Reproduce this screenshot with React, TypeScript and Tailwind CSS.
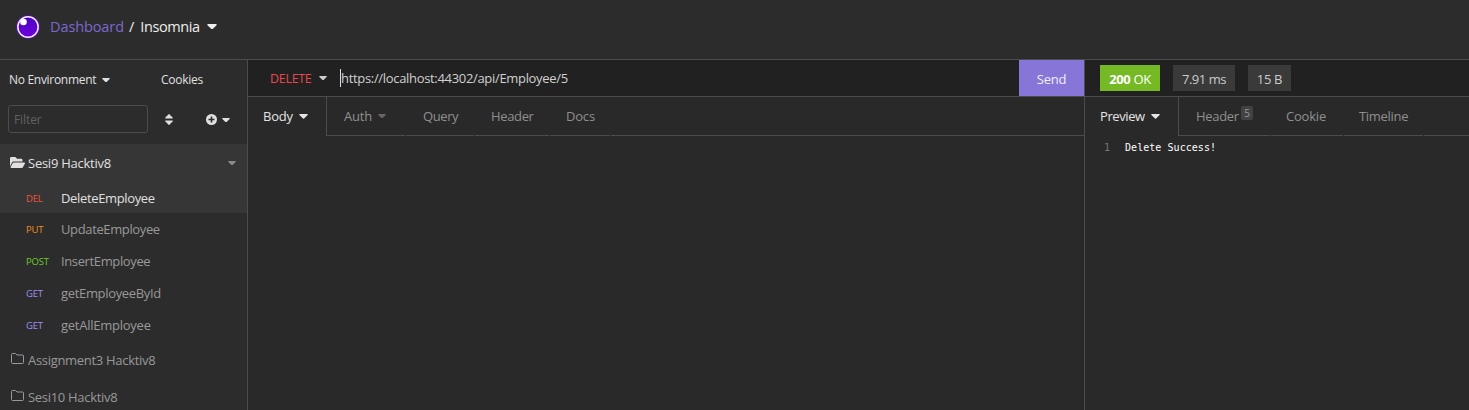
import React from "react";

const Caret = ({ className = "", w = 9 }: { className?: string; w?: number }) => (
  <svg className={`shrink-0 ${className}`} width={w} height={(w * 5) / 9} viewBox="0 0 9 5" fill="currentColor">
    <path d="M0.9 0h7.2c.6 0 .9.7.5 1.1L5.1 4.6c-.3.3-.8.3-1.1 0L.4 1.1C0 .7.3 0 .9 0z" />
  </svg>
);

const FolderOpen = () => (
  <svg className="mb-[2px] shrink-0" width="15" height="11" viewBox="0 0 576 384" preserveAspectRatio="none" fill="currentColor">
    <path d="M572.700 228.100l-72.400 124.200A64 64 0 0 1 445 384H45c-18.500 0-30.100-20.100-20.700-36.100l72.400-124.200A64 64 0 0 1 152 192h400c18.500 0 30.100 20.100 20.700 36.100zM152 160h328v-48c0-26.500-21.500-48-48-48H272L208 0H48C21.500 0 0 21.500 0 48v278l69.100-118.400C86.200 178.200 118 160 152 160z" />
  </svg>
);

const Folder = () => (
  <svg className="mb-[2px] shrink-0" width="13" height="11" viewBox="0 0 13 11" fill="none" stroke="currentColor">
    <path d="M1.500 0.500h3l1.500 1.500h5.500a1 1 0 0 1 1 1v6.500a1 1 0 0 1-1 1h-10a1 1 0 0 1-1-1v-8a1 1 0 0 1 1-1z" />
  </svg>
);

const Logo = () => (
  <svg width="24" height="24" viewBox="0 0 24 24" className="shrink-0">
    <defs>
      <linearGradient id="orb" x1="0" y1="0" x2="0" y2="1">
        <stop offset="0" stopColor="#4a00c0" />
        <stop offset="1" stopColor="#6f00dd" />
      </linearGradient>
    </defs>
    <circle cx="12" cy="12" r="11.800" fill="#5a10c0" />
    <circle cx="12" cy="12" r="10.900" fill="#f4ecff" />
    <circle cx="12" cy="12" r="9.400" fill="url(#orb)" />
    <circle cx="7.500" cy="7" r="3.300" fill="#fff" />
  </svg>
);

const requests = [
  { m: "PUT", c: "text-[#ee8e1e]", n: "UpdateEmployee", t: "tracking-[-0.37px]" },
  { m: "POST", c: "text-[#6fca2a]", n: "InsertEmployee", t: "tracking-[-0.37px]" },
  { m: "GET", c: "text-[#9f8ff0]", n: "getEmployeeById", t: "tracking-[-0.33px]" },
  { m: "GET", c: "text-[#9f8ff0]", n: "getAllEmployee", t: "tracking-[-0.25px]" },
];

function Sidebar() {
  return (
    <aside className="flex w-[248px] shrink-0 flex-col border-r border-[#4c4c4c] text-[#e0e0e0]">
      <div className="flex h-10 shrink-0 items-center pl-[9px] text-[12px]">
        <span className="w-[87px] tracking-[-0.3px]">No Environment</span>
        <Caret className="ml-1.5" w={8} />
        <span className="ml-[51px] tracking-[-0.25px]">Cookies</span>
      </div>
      <div className="flex h-[44px] shrink-0 items-start pt-[5px] pl-2">
        <div className="flex h-7 w-[140px] items-center rounded-[3px] border border-[#4c4c4c] pt-px pl-[5px] text-[12px] tracking-[-0.1px] text-[#616161]">Filter</div>
        <svg className="mt-[9px] ml-[17px]" width="8" height="11" viewBox="0 0 8 11" fill="currentColor">
          <path d="M.5 4.500h7c.4 0 .6-.5.3-.8L4.400.3a.6.6 0 0 0-.8 0L.2 3.700c-.3.3-.1.800.3.800zM.5 6.500h7c.4 0 .6.5.3.800L4.400 10.700a.6.6 0 0 1-.8 0L.2 7.300c-.3-.3-.1-.8.3-.8z" />
        </svg>
        <svg className="mt-[9px] ml-[33px]" width="11" height="11" viewBox="0 0 11 11">
          <circle cx="5.500" cy="5.500" r="5.500" fill="#e0e0e0" />
          <path d="M5.500 2.500v6M2.500 5.500h6" stroke="#2c2c2c" strokeWidth="1.600" />
        </svg>
        <Caret className="mt-[13px] ml-[5px]" w={8} />
      </div>
      <div className="flex h-[69px] shrink-0 flex-col bg-[#363636]">
        <div className="flex h-[38px] shrink-0 items-center pl-[10px]">
          <FolderOpen />
          <span className="ml-[3px] tracking-[-0.25px]">Sesi9 Hacktiv8</span>
          <Caret className="mr-[11px] ml-auto text-[#8a8a8a]" w={8} />
        </div>
        <div className="flex h-[32px] shrink-0 items-center pl-[26px]">
          <span className="w-[35px] pt-px text-[9.5px] tracking-[-0.2px] text-[#f0503c]">DEL</span>
          <span className="tracking-[-0.35px]">DeleteEmployee</span>
        </div>
      </div>
      <div className="flex flex-col text-[#999]">
        {requests.map((r) => (
          <div key={r.n} className="flex h-8 shrink-0 items-center pl-[26px]">
            <span className={`w-[35px] pt-[2px] text-[9.5px] tracking-[-0.2px] ${r.c}`}>{r.m}</span>
            <span className={r.t}>{r.n}</span>
          </div>
        ))}
        {["Assignment3 Hacktiv8", "Sesi10 Hacktiv8"].map((n) => (
          <div key={n} className="flex h-[37px] shrink-0 items-center pl-[11px]">
            <Folder />
            <span className="ml-[4px] tracking-[-0.3px]">{n}</span>
          </div>
        ))}
      </div>
    </aside>
  );
}

const Tab = ({ children, className }: { children: React.ReactNode; className: string }) => (
  <div className={`mr-px flex items-center border-b border-[#4c4c4c] pl-4 ${className}`}>{children}</div>
);

function RequestPane() {
  return (
    <section className="flex w-[837px] shrink-0 flex-col border-r border-[#4c4c4c] bg-[#292929]">
      <div className="flex h-[37px] border-b border-[#4c4c4c] bg-[#212121]">
        <div className="flex flex-1 items-center pl-[22px]">
          <span className="w-[43px] pt-[2px] text-[12.500px] tracking-[-0.3px] text-[#e5484d]">DELETE</span>
          <Caret className="ml-[6px] text-[#ccc]" w={8} />
          <span className="ml-[13px] h-[18px] w-px bg-[#ddd]" />
          <span className="tracking-[-0.32px] text-[#d0d0d0]">https://localhost:44302/api/Employee/5</span>
        </div>
        <button className="w-[65px] pt-px text-[#f0eefa] bg-[#8875d8] tracking-[-0.2px]">Send</button>
      </div>
      <nav className="flex h-[39px] text-[#8f8f8f]">
        <div className="flex w-[79px] items-center border-r border-[#4c4c4c] pb-px pl-[15px] text-[#e4e4e4]">
          <span className="w-[30px] tracking-[-0.25px]">Body</span>
          <Caret className="ml-[6px]" w={9} />
        </div>
        <Tab className="w-[78px]">
          <span className="ml-px w-[29px] tracking-[-0.2px]">Auth</span>
          <Caret className="ml-[5px] text-[#666]" w={8} />
        </Tab>
        <Tab className="w-[68px]"><span className="ml-px tracking-[-0.4px]">Query</span></Tab>
        <Tab className="w-[74px]"><span className="tracking-[-0.35px]">Header</span></Tab>
        <Tab className="w-[60px]"><span className="tracking-[-0.2px]">Docs</span></Tab>
        <div className="flex-1 border-b border-[#4c4c4c]" />
      </nav>
    </section>
  );
}

function ResponsePane() {
  return (
    <section className="flex min-w-0 flex-1 flex-col bg-[#292929]">
      <div className="flex h-[37px] items-center gap-[13px] border-b border-[#4c4c4c] bg-[#212121] pl-[15px] text-[#ccc]">
        <div className="flex h-[26px] w-[60px] items-center justify-center bg-[#75ba24] pt-[2px] text-white">
          <span className="tracking-[-0.35px]"><b>200</b> OK</span>
        </div>
        <div className="flex h-[26px] w-[62px] items-center justify-center bg-[#3a3a3a] pt-[2px] tracking-[-0.45px]">7.91 ms</div>
        <div className="flex h-[26px] w-[43px] items-center justify-center bg-[#3a3a3a] pt-[2px] tracking-[-0.3px]">15 B</div>
      </div>
      <nav className="flex h-[39px] text-[#8f8f8f]">
        <div className="flex w-[94px] items-center border-r border-[#4c4c4c] pb-px pl-[15px] text-[#e4e4e4]">
          <span className="w-[45px] tracking-[-0.4px]">Preview</span>
          <Caret className="ml-[6px]" w={9} />
        </div>
        <Tab className="w-[91px]">
          <span className="ml-px w-[42px] tracking-[-0.3px]">Header</span>
          <span className="mb-1.5 ml-[3px] flex h-[14px] w-3 items-center justify-center rounded-[2px] bg-[#424242] text-[10px] text-[#999]">5</span>
        </Tab>
        <Tab className="w-[72px]"><span className="-ml-px tracking-[-0.2px]">Cookie</span></Tab>
        <Tab className="w-[79px]"><span className="-ml-px tracking-[-0.3px]">Timeline</span></Tab>
        <div className="flex-1 border-b border-[#4c4c4c]" />
      </nav>
      <div className="flex pt-[4px] font-['DejaVu_Sans_Mono',monospace] text-[10px] leading-4">
        <span className="w-10 pl-[19px] text-[#777]">1</span>
        <span className="tracking-[0.05px] text-[#fff]">Delete Success!</span>
      </div>
    </section>
  );
}

export default function App() {
  return (
    <div className="flex h-[410px] w-[1469px] flex-col overflow-hidden bg-[#2c2c2c] font-['Open_Sans',sans-serif] text-[13px] leading-[18px] whitespace-nowrap">
      <header className="flex h-[60px] shrink-0 items-center border-b border-[#4c4c4c] pt-0 pb-[6px] pl-4 text-[14.500px] text-[#eee]">
        <Logo />
        <span className="ml-[10px] w-[74px] tracking-[-0.1px] text-[#7c68cf]">Dashboard</span>
        <span className="ml-[5px]">/</span>
        <span className="ml-[6px] w-[60px] tracking-[-0.4px]">Insomnia</span>
        <Caret className="ml-[7px]" w={10} />
      </header>
      <main className="flex min-h-0 flex-1">
        <Sidebar />
        <RequestPane />
        <ResponsePane />
      </main>
    </div>
  );
}
